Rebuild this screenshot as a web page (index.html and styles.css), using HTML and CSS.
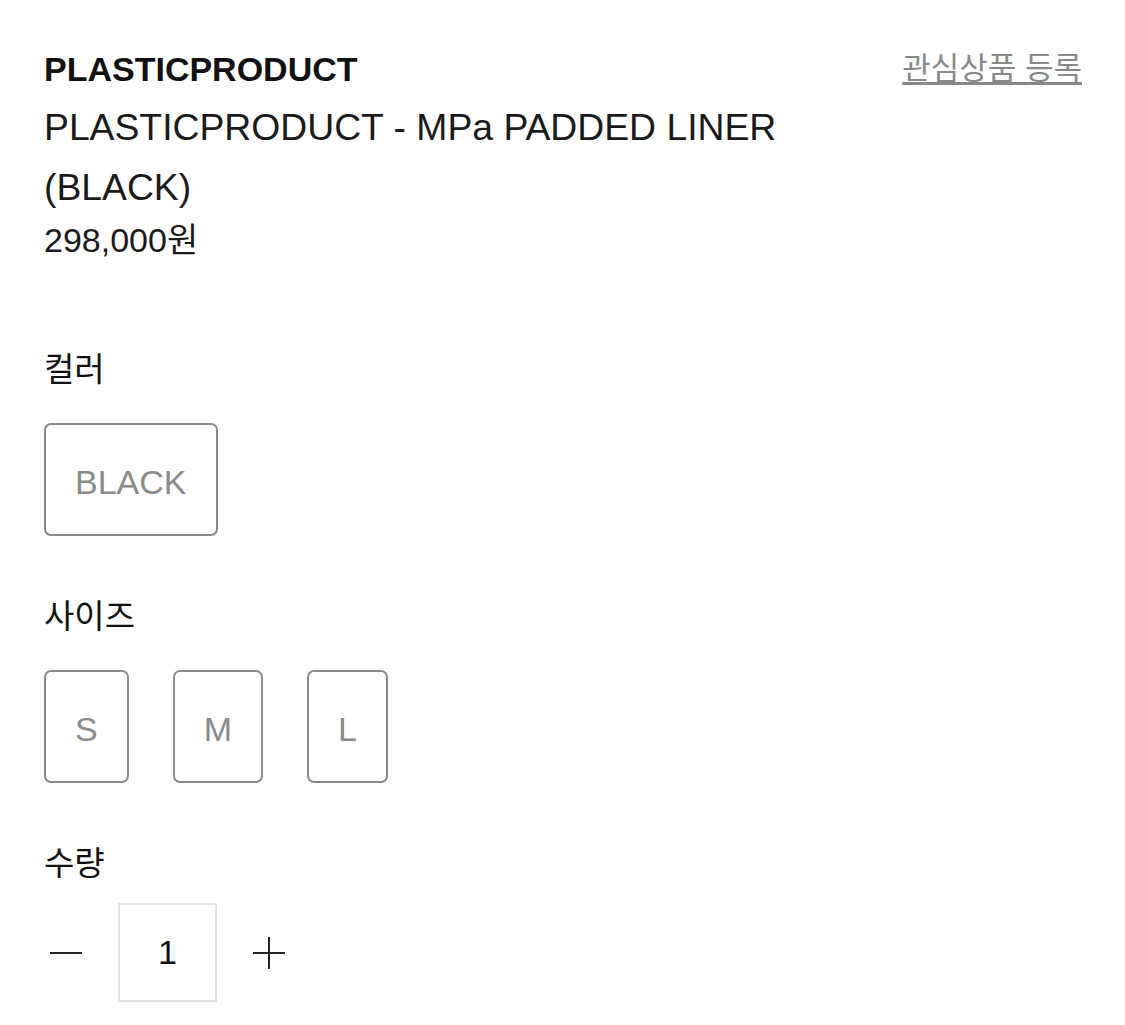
FILE: index.html
```html
<!DOCTYPE html>
<html>
<head>
    <meta charset="utf-8">
    <title>PLASTICPRODUCT - MPa PADDED LINER (BLACK)</title>
    <link rel="stylesheet" href="styles.css">
</head>
<body>
    <div class="product">
        <div class="product-head">
            <div class="product-info">
                <div class="brand">PLASTICPRODUCT</div>
                <h1 class="title">PLASTICPRODUCT - MPa PADDED LINER (BLACK)</h1>
                <div class="price">298,000원</div>
            </div>
            <a href="#" class="wish">관심상품 등록</a>
        </div>

        <div class="options">
            <div class="option">
                <div class="option-label">컬러</div>
                <div class="option-list">
                    <button class="chip">BLACK</button>
                </div>
            </div>

            <div class="option">
                <div class="option-label">사이즈</div>
                <div class="option-list">
                    <button class="chip">S</button>
                    <button class="chip">M</button>
                    <button class="chip">L</button>
                </div>
            </div>

            <div class="option">
                <div class="option-label">수량</div>
                <div class="qty">
                    <button class="qty-btn" id="qty-minus">
                        <svg width="34" height="34" viewBox="0 0 34 34"><path d="M1 17h32" stroke="#222" stroke-width="2"/></svg>
                    </button>
                    <div class="qty-value" id="qty-value">1</div>
                    <button class="qty-btn" id="qty-plus">
                        <svg width="34" height="34" viewBox="0 0 34 34"><path d="M1 17h32M17 1v32" stroke="#222" stroke-width="2"/></svg>
                    </button>
                </div>
            </div>
        </div>
    </div>
</body>
</html>
```

FILE: styles.css
```css
body {
    font-family: "Liberation Sans", Arial, "Noto Sans CJK KR", sans-serif;
    margin: 0;
    padding: 49px 43px 0 44px;
    color: #111;
    background-color: white;
}
.product-head {
    display: flex;
    justify-content: space-between;
    align-items: flex-start;
}
.product-info {
    max-width: 790px;
}
.brand {
    font-size: 34px;
    font-weight: bold;
    line-height: 40px;
}
.title {
    font-size: 37.3px;
    font-weight: normal;
    line-height: 60px;
    margin: 8px 0 0;
    color: #1a1a1a;
}
.price {
    font-size: 34px;
    line-height: 46px;
    color: #1a1a1a;
}
.wish {
    font-size: 31px;
    line-height: 40px;
    color: #888;
    text-decoration: underline;
    text-underline-offset: 3px;
}
.options {
    margin-top: 87px;
    display: flex;
    flex-direction: column;
    gap: 61px;
}
.option-label {
    font-size: 33px;
    line-height: 40px;
    color: #111;
}
.option-list {
    display: flex;
    gap: 44px;
    margin-top: 33px;
}
.chip {
    font-family: inherit;
    font-size: 34px;
    line-height: 40px;
    padding: 37px 29px 32px;
    border: 2px solid #8a8a8a;
    border-radius: 7px;
    background-color: white;
    color: #8a8a8a;
    cursor: pointer;
}
.qty {
    display: flex;
    align-items: center;
    gap: 30px;
    margin-top: 19px;
}
.qty-btn {
    width: 44px;
    height: 44px;
    padding: 0;
    border: none;
    background: none;
    display: flex;
    align-items: center;
    justify-content: center;
    cursor: pointer;
}
.qty-value {
    width: 95px;
    height: 95px;
    border: 2px solid #e2e2e2;
    display: flex;
    align-items: center;
    justify-content: center;
    font-size: 34px;
    color: #111;
}
```
